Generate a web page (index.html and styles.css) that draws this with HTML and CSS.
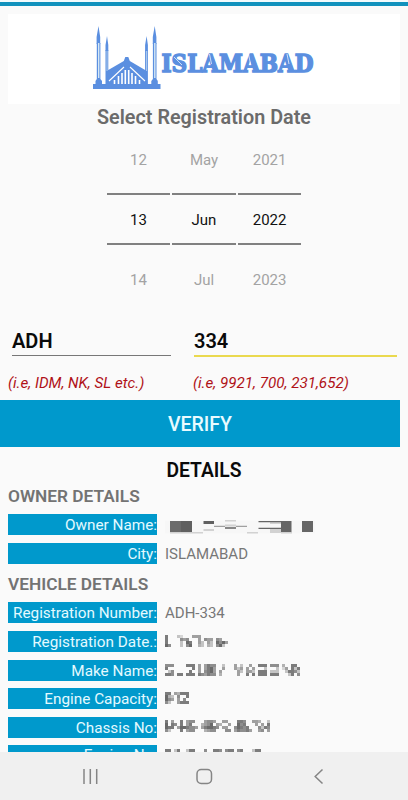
FILE: index.html
```
<!DOCTYPE html>
<html lang="en">
<head>
    <meta charset="UTF-8">
    <meta name="viewport" content="width=device-width, initial-scale=1.0">
    <title>Islamabad Vehicle Verification</title>
    <link rel="stylesheet" href="styles.css">
</head>
<body>
    <div class="screen">
        <div class="topbar"></div>
        <div class="banner">
            <svg class="logo" width="232" height="90" viewBox="88 14 232 90">
                <g fill="#5b8fe0">
                    <path d="M93 84h67.500v5H93z"/>
                    <path d="M98.500 26l1.700 11v7h-3.600v-7zM154.700 26l1.700 11v7h-3.600v-7z"/>
                    <path d="M107 36l1.300 9v6h-2.800v-6zM146.600 36l1.300 9v6h-2.800v-6z"/>
                    <path d="M96.800 43h3.600v36l1.600 2v4h-6.500v-4l1.300-2zM152.900 43h3.600v36l1.300 2v4h-6.500v-4l1.600-2z"/>
                    <path d="M105.500 50h2.800v20l15.500-9 1.500-4h3l1.500 4 15.300 9V50h2.800v35h-42.400z"/>
                </g>
                <g stroke="#d6e8f4" stroke-width="1.400">
                    <path d="M98.700 43v35M154.800 43v35"/>
                    <path d="M107 51v20M146.600 51v20" stroke-width=".7"/>
                </g>
                <g stroke="#fff" stroke-width="1.600">
                    <path d="M109 81l15-14M145 81l-15-14" stroke-width="1.100"/>
                    <path d="M114.500 84v-4M118.500 84v-8M122 84V73M125.300 84V70M128.700 84V70M132 84V73M135.500 84v-8M139.500 84v-4"/>
                </g>
                <text class="logo-text" x="161.500" y="71.500" textLength="152" lengthAdjust="spacingAndGlyphs">ISLAMABAD</text>
                <!-- stencil cuts -->
                <path d="M174 57l8 8M209.500 54l2 10M248.500 54l2 10M287 54l2 10" stroke="#fff" stroke-width=".7"/>
            </svg>
        </div>

        <h1 class="title">Select Registration Date</h1>

        <div class="picker">
            <div class="wheel"><span>12</span><span class="current">13</span><span>14</span></div>
            <div class="wheel"><span>May</span><span class="current">Jun</span><span>Jul</span></div>
            <div class="wheel"><span>2021</span><span class="current">2022</span><span>2023</span></div>
        </div>

        <div class="fields">
            <div class="field series">
                <div class="entry">ADH</div>
                <div class="hint">(i.e, IDM, NK, SL etc.)</div>
            </div>
            <div class="field number">
                <div class="entry">334</div>
                <div class="hint">(i.e, 9921, 700, 231,652)</div>
            </div>
        </div>

        <div class="verify">VERIFY</div>

        <div class="details">
            <h2 class="details-title">DETAILS</h2>
            <h3 class="section">OWNER DETAILS</h3>
            <div class="row">
                <span class="label">Owner Name:</span>
                <svg class="mask-name" width="150" height="16" viewBox="165 520 150 16">
                    <path d="M165 521.500h150v13H165z" fill="#f7f7f7"/>
                    <path d="M170 522h11v11h-11z" fill="#6b6b6b"/>
                    <path d="M181 522h11v11h-11z" fill="#606060"/>
                    <path d="M170 533h22v1.500h-22zM192 533h11v1.500h-11zM203.500 530h10.500v2h-10.500zM225 521h11v1.500h-11zM225 525.500h11v2h-11zM247 533h11v1.500h-11zM270 530h11v4h-11zM281 533h11v1.500h-11zM270 523h11v2h-11z" fill="#d2d2d2"/>
                    <path d="M203.500 522h10.500v3h-10.500z" fill="#606060"/>
                    <path d="M214 526.800h11v1.200h-11zM236 526.800h11v1.200h-11z" fill="#a0a0a0"/>
                    <path d="M225 528h11v2h-11z" fill="#888"/>
                    <path d="M258.500 522h22.500v1.200h-22.500zM258.500 528.700h22.500v1.300h-22.500z" fill="#666"/>
                    <path d="M281 522h10.500v11H281zM302 522h11v11h-11z" fill="#666"/>
                </svg>
            </div>
            <div class="row"><span class="label">City:</span><span class="value">ISLAMABAD</span></div>

            <h3 class="section">VEHICLE DETAILS</h3>
            <div class="row registration"><span class="label">Registration Number:</span><span class="value">ADH-334</span></div>
            <div class="row"><span class="label">Registration Date.:</span>
                <span class="mask" data-cells="700032000555000000000 700006560005065506500 700003087005305308685 860003068004304306830"></span></div>
            <div class="row"><span class="label">Make Name:</span>
                <span class="mask" data-cells="6660000777050576600300050300500777066604007700 7000000007050578500500053505050003000302507370 0360000070050678505000005305530777033300377630 7760770777076576604000005007070777077700037060"></span></div>
            <div class="row"><span class="label">Engine Capacity:</span>
                <span class="mask" data-cells="77054777 84306007 86505060 63005777"></span></div>
            <div class="row"><span class="label">Chassis No:</span>
                <span class="mask high" data-cells="70500705660005665005500077600554003 80760705700045680540050086700050507 87705887665057887605500687670006376 63000705660004566000660576675005605"></span></div>
            <div class="row last"><span class="label">Engine No:</span>
                <span class="mask" data-cells="7703700377000600776067706700037700 5003070400000000003003005000300050 0000000000000000000000000000000000 0000000000000000000000000000000000"></span></div>
        </div>

        <div class="navbar">
            <svg width="408" height="48" viewBox="0 752 408 48" fill="none" stroke="#858585" stroke-width="1.500">
                <path d="M84 769v15M90.300 769v15M96.700 769v15"/>
                <rect x="197" y="769.500" width="14.500" height="14" rx="4.200"/>
                <path d="M322.500 769.500l-7.300 7 7.300 7"/>
            </svg>
        </div>
    </div>

    <script>
        // Each digit is the darkness of one 3px block in a hidden value
        document.querySelectorAll(".mask").forEach(function(mask) {
            var rows = mask.dataset.cells.split(" ");
            var width = rows[0].length * 3;
            var svg = '<svg width="' + width + '" height="12" shape-rendering="crispEdges">';
            rows.forEach(function(row, y) {
                row.split("").forEach(function(cell, x) {
                    if (cell !== "0") {
                        var shade = 250 - cell * 18;
                        svg += '<rect x="' + x * 3 + '" y="' + y * 3 + '" width="3" height="3" fill="rgb(' + shade + ',' + shade + ',' + shade + ')"/>';
                    }
                });
            });
            mask.innerHTML = svg + "</svg>";
        });
    </script>
</body>
</html>
```
FILE: styles.css
```
* {
    box-sizing: border-box;
}

body {
    margin: 0;
    font-family: Roboto, sans-serif;
    background-color: #fafafa;
}

.screen {
    width: 408px;
    height: 800px;
    display: flex;
    flex-direction: column;
    overflow: hidden;
}

.topbar {
    height: 6px;
    flex: none;
    border-top: 2px solid #f2fbfd;
    background-color: #1192bd;
}

.banner {
    height: 90px;
    flex: none;
    margin: 8px 8px 0;
    padding-left: 80px;
    background-color: white;
}

.logo {
    display: block;
}

.logo-text {
    font-family: "DejaVu Serif", serif;
    font-weight: bold;
    font-size: 24px;
    fill: #5b8fe0;
    stroke: #5b8fe0;
    stroke-width: 1.5px;
}

.title {
    margin: 0;
    height: 26px;
    flex: none;
    line-height: 27px;
    font-size: 19.8px;
    font-weight: 600;
    text-align: center;
    color: #6b6b6b;
}

/* Date wheels */
.picker {
    height: 180px;
    flex: none;
    display: flex;
    justify-content: center;
    gap: 2px;
}

.wheel {
    width: 63.6px;
    display: flex;
    flex-direction: column;
    text-align: center;
    font-size: 15px;
    color: #a3a3a3;
}

.wheel span {
    height: 63px;
    line-height: 61px;
}

.wheel .current {
    height: 52px;
    line-height: 51px;
    color: #111;
    border-top: 2px solid #808080;
    border-bottom: 2px solid #808080;
}

.wheel span:last-child {
    line-height: 70px;
}

/* Plate number inputs */
.fields {
    height: 90px;
    flex: none;
    display: flex;
    padding: 15px 11px 0 8px;
}

.field {
    flex: none;
}

.series {
    width: 185px;
}

.entry {
    height: 31px;
    line-height: 32px;
    font-size: 20px;
    font-weight: 600;
    color: #0a0a0a;
}

.series .entry {
    width: 159px;
    margin-left: 4px;
    border-bottom: 1px solid #777;
}

.number .entry {
    width: 203px;
    margin-left: 1px;
    height: 32px;
    border-bottom: 2px solid #ead94f;
}

.hint {
    margin-top: 17px;
    line-height: 20px;
    font-size: 15.2px;
    font-style: italic;
    color: #b01218;
}

.number .hint {
    margin-top: 16px;
}

.verify {
    width: 400px;
    height: 47px;
    flex: none;
    line-height: 50px;
    text-align: center;
    font-size: 19.5px;
    font-weight: 500;
    color: #e9fbff;
    background-color: #0099cc;
}

/* Details table */
.details {
    height: 305px;
    flex: none;
    padding: 9px 8px 0;
    overflow: hidden;
}

.details-title {
    margin: 0;
    height: 27px;
    line-height: 29px;
    font-size: 19.3px;
    font-weight: 600;
    text-align: center;
    color: #0a0a0a;
}

.section {
    margin: 0;
    height: 31px;
    line-height: 26px;
    font-size: 17.3px;
    font-weight: 600;
    color: #737373;
}

.row {
    display: flex;
    height: 21px;
    margin-bottom: 7.5px;
}

.registration {
    margin-bottom: 8.2px;
}

.label {
    width: 149px;
    line-height: 23px;
    font-size: 15.3px;
    text-align: right;
    white-space: nowrap;
    color: #e4faff;
    background-color: #0099cc;
}

.last .label {
    line-height: 20px;
}

.value {
    margin-left: 8px;
    line-height: 23px;
    font-size: 15px;
    color: #777;
}

.mask-name {
    margin: 5px 0 0 8px;
}

.mask {
    margin: 4px 0 0 8px;
}

.mask.high {
    margin-top: 3px;
}

.mask svg {
    display: block;
}

.navbar {
    height: 48px;
    flex: none;
    background-color: #f0f0f0;
}

.navbar svg {
    display: block;
}
```
